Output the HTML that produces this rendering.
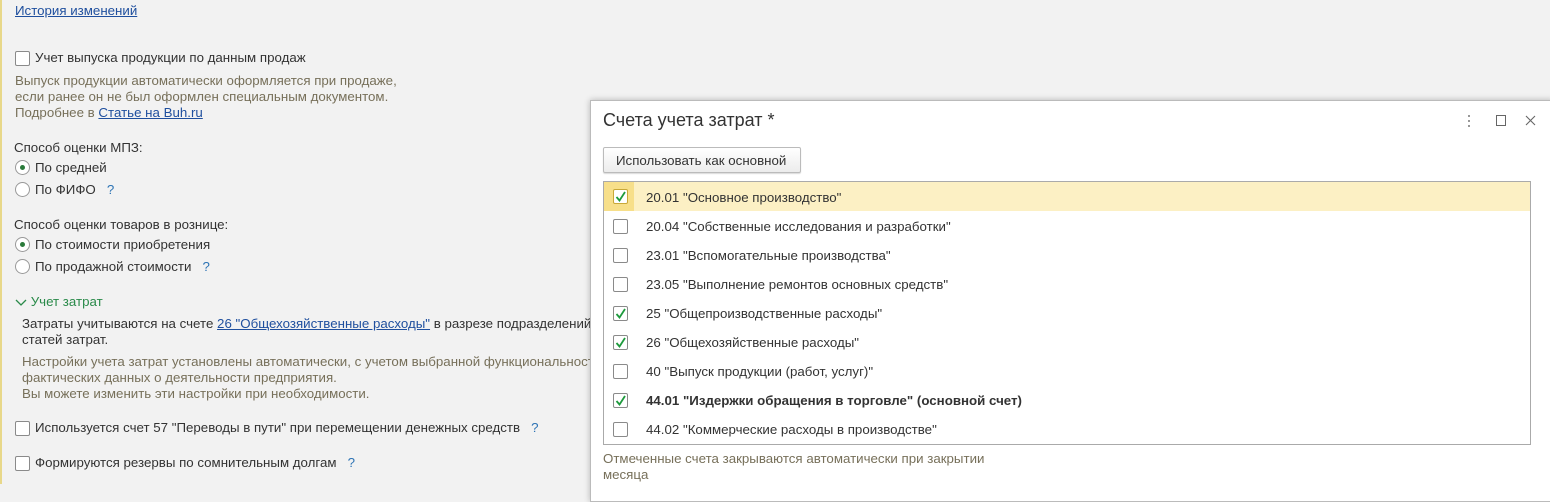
<!DOCTYPE html>
<html><head><meta charset="utf-8"><style>
body{margin:0;width:1550px;height:484px;background:#f2f2f2;font-family:"Liberation Sans",Arial,sans-serif;font-size:13.3px;color:#333;position:relative;overflow:hidden}
.a{position:absolute;white-space:nowrap}
.lnk{color:#1f4f9e;text-decoration:underline}
.g{color:#77705a}
.cb{position:absolute;width:13px;height:13px;border:1px solid #8a8a8a;background:#fff;border-radius:2px}
.rb{position:absolute;width:13px;height:13px;border:1px solid #999;background:#fff;border-radius:50%}
.rb.on::after{content:"";position:absolute;left:4px;top:4px;width:5px;height:5px;border-radius:50%;background:#2a7a3a}
.q{color:#2e74b5}
.dlg{position:absolute;left:590px;top:100px;width:962px;height:400px;background:#fff;border:1px solid #bbb;box-shadow:0 0 6px rgba(0,0,0,.25)}
.row{position:absolute;left:0;width:926px;height:29px}
.row .cb{left:9px;top:8px}
.row .t{position:absolute;left:42px;top:8px;white-space:nowrap}
.ck{position:absolute;left:1px;top:1px}
</style></head><body>
<div style="position:absolute;left:0;top:0;width:2px;height:484px;background:#e8d88a"></div>
<div class="a lnk" style="left:15px;top:3px">История изменений</div>
<div class="cb" style="left:15px;top:51px"></div>
<div class="a" style="left:35px;top:50px">Учет выпуска продукции по данным продаж</div>
<div class="a g" style="left:15px;top:73px;line-height:16px">Выпуск продукции автоматически оформляется при продаже,<br>если ранее он не был оформлен специальным документом.<br>Подробнее в <span class="lnk">Статье на Buh.ru</span></div>
<div class="a" style="left:14px;top:140px">Способ оценки МПЗ:</div>
<div class="rb on" style="left:15px;top:160px"></div><div class="a" style="left:35px;top:160px">По средней</div>
<div class="rb" style="left:15px;top:182px"></div><div class="a" style="left:35px;top:182px">По ФИФО &nbsp;&nbsp;<span class="q">?</span></div>
<div class="a" style="left:14px;top:217px">Способ оценки товаров в рознице:</div>
<div class="rb on" style="left:15px;top:237px"></div><div class="a" style="left:35px;top:237px">По стоимости приобретения</div>
<div class="rb" style="left:15px;top:259px"></div><div class="a" style="left:35px;top:259px">По продажной стоимости &nbsp;&nbsp;<span class="q">?</span></div>
<div class="a" style="left:15px;top:294px;color:#2a8a4a"><svg width="12" height="10" style="vertical-align:middle"><path d="M1 3l5 5 5-5" stroke="#2a8a4a" fill="none" stroke-width="1.3"/></svg> Учет затрат</div>
<div class="a" style="left:22px;top:316px;line-height:16px">Затраты учитываются на счете <span class="lnk">26 "Общехозяйственные расходы"</span> в разрезе подразделений и<br>статей затрат.</div>
<div class="a g" style="left:22px;top:354px;line-height:16px">Настройки учета затрат установлены автоматически, с учетом выбранной функциональности и<br>фактических данных о деятельности предприятия.<br>Вы можете изменить эти настройки при необходимости.</div>
<div class="cb" style="left:15px;top:421px"></div>
<div class="a" style="left:35px;top:420px">Используется счет 57 "Переводы в пути" при перемещении денежных средств &nbsp;&nbsp;<span class="q">?</span></div>
<div class="cb" style="left:15px;top:456px"></div>
<div class="a" style="left:35px;top:455px">Формируются резервы по сомнительным долгам &nbsp;&nbsp;<span class="q">?</span></div>

<div class="dlg">
<div class="a" style="left:12px;top:9px;font-size:18px;color:#333">Счета учета затрат *</div>
<svg style="position:absolute;left:876px;top:13px" width="4" height="14"><circle cx="2" cy="2" r="1" fill="#777"/><circle cx="2" cy="7" r="1" fill="#777"/><circle cx="2" cy="12" r="1" fill="#777"/></svg>
<div style="position:absolute;left:905px;top:14px;width:8px;height:9px;border:1px solid #666"></div>
<svg style="position:absolute;left:934px;top:14px" width="11" height="11"><path d="M1 1L10 10M10 1L1 10" stroke="#666" stroke-width="1.1"/></svg>
<div style="position:absolute;left:12px;top:46px;width:196px;height:24px;border:1px solid #bbb;border-radius:2px;background:linear-gradient(#fff,#ececec);box-shadow:0 1px 1px rgba(0,0,0,.15)"><div class="a" style="left:12px;top:5px">Использовать как основной</div></div>
<div style="position:absolute;left:12px;top:80px;width:926px;height:262px;border:1px solid #aaa;background:#fff">
<div class="row" style="top:0;background:#fcf0c4"><div style="position:absolute;left:0;top:0;width:30px;height:29px;background:#f7df8a"></div><div class="cb" style="left:9px;top:7px;border-color:#c9a838"><svg class="ck" width="11" height="11"><path d="M1.5 6L4.5 9.5L10 1" stroke="#1d9a3c" stroke-width="1.8" fill="none"/></svg></div><div class="t">20.01 "Основное производство"</div></div>
<div class="row" style="top:29px"><div class="cb"></div><div class="t">20.04 "Собственные исследования и разработки"</div></div>
<div class="row" style="top:58px"><div class="cb"></div><div class="t">23.01 "Вспомогательные производства"</div></div>
<div class="row" style="top:87px"><div class="cb"></div><div class="t">23.05 "Выполнение ремонтов основных средств"</div></div>
<div class="row" style="top:116px"><div class="cb"><svg class="ck" width="11" height="11"><path d="M1.5 6L4.5 9.5L10 1" stroke="#1d9a3c" stroke-width="1.8" fill="none"/></svg></div><div class="t">25 "Общепроизводственные расходы"</div></div>
<div class="row" style="top:145px"><div class="cb"><svg class="ck" width="11" height="11"><path d="M1.5 6L4.5 9.5L10 1" stroke="#1d9a3c" stroke-width="1.8" fill="none"/></svg></div><div class="t">26 "Общехозяйственные расходы"</div></div>
<div class="row" style="top:174px"><div class="cb"></div><div class="t">40 "Выпуск продукции (работ, услуг)"</div></div>
<div class="row" style="top:203px"><div class="cb"><svg class="ck" width="11" height="11"><path d="M1.5 6L4.5 9.5L10 1" stroke="#1d9a3c" stroke-width="1.8" fill="none"/></svg></div><div class="t" style="font-weight:bold">44.01 "Издержки обращения в торговле" (основной счет)</div></div>
<div class="row" style="top:232px"><div class="cb"></div><div class="t">44.02 "Коммерческие расходы в производстве"</div></div>
</div>
<div class="a g" style="left:12px;top:350px;line-height:16px">Отмеченные счета закрываются автоматически при закрытии<br>месяца</div>
</div>
</body></html>
